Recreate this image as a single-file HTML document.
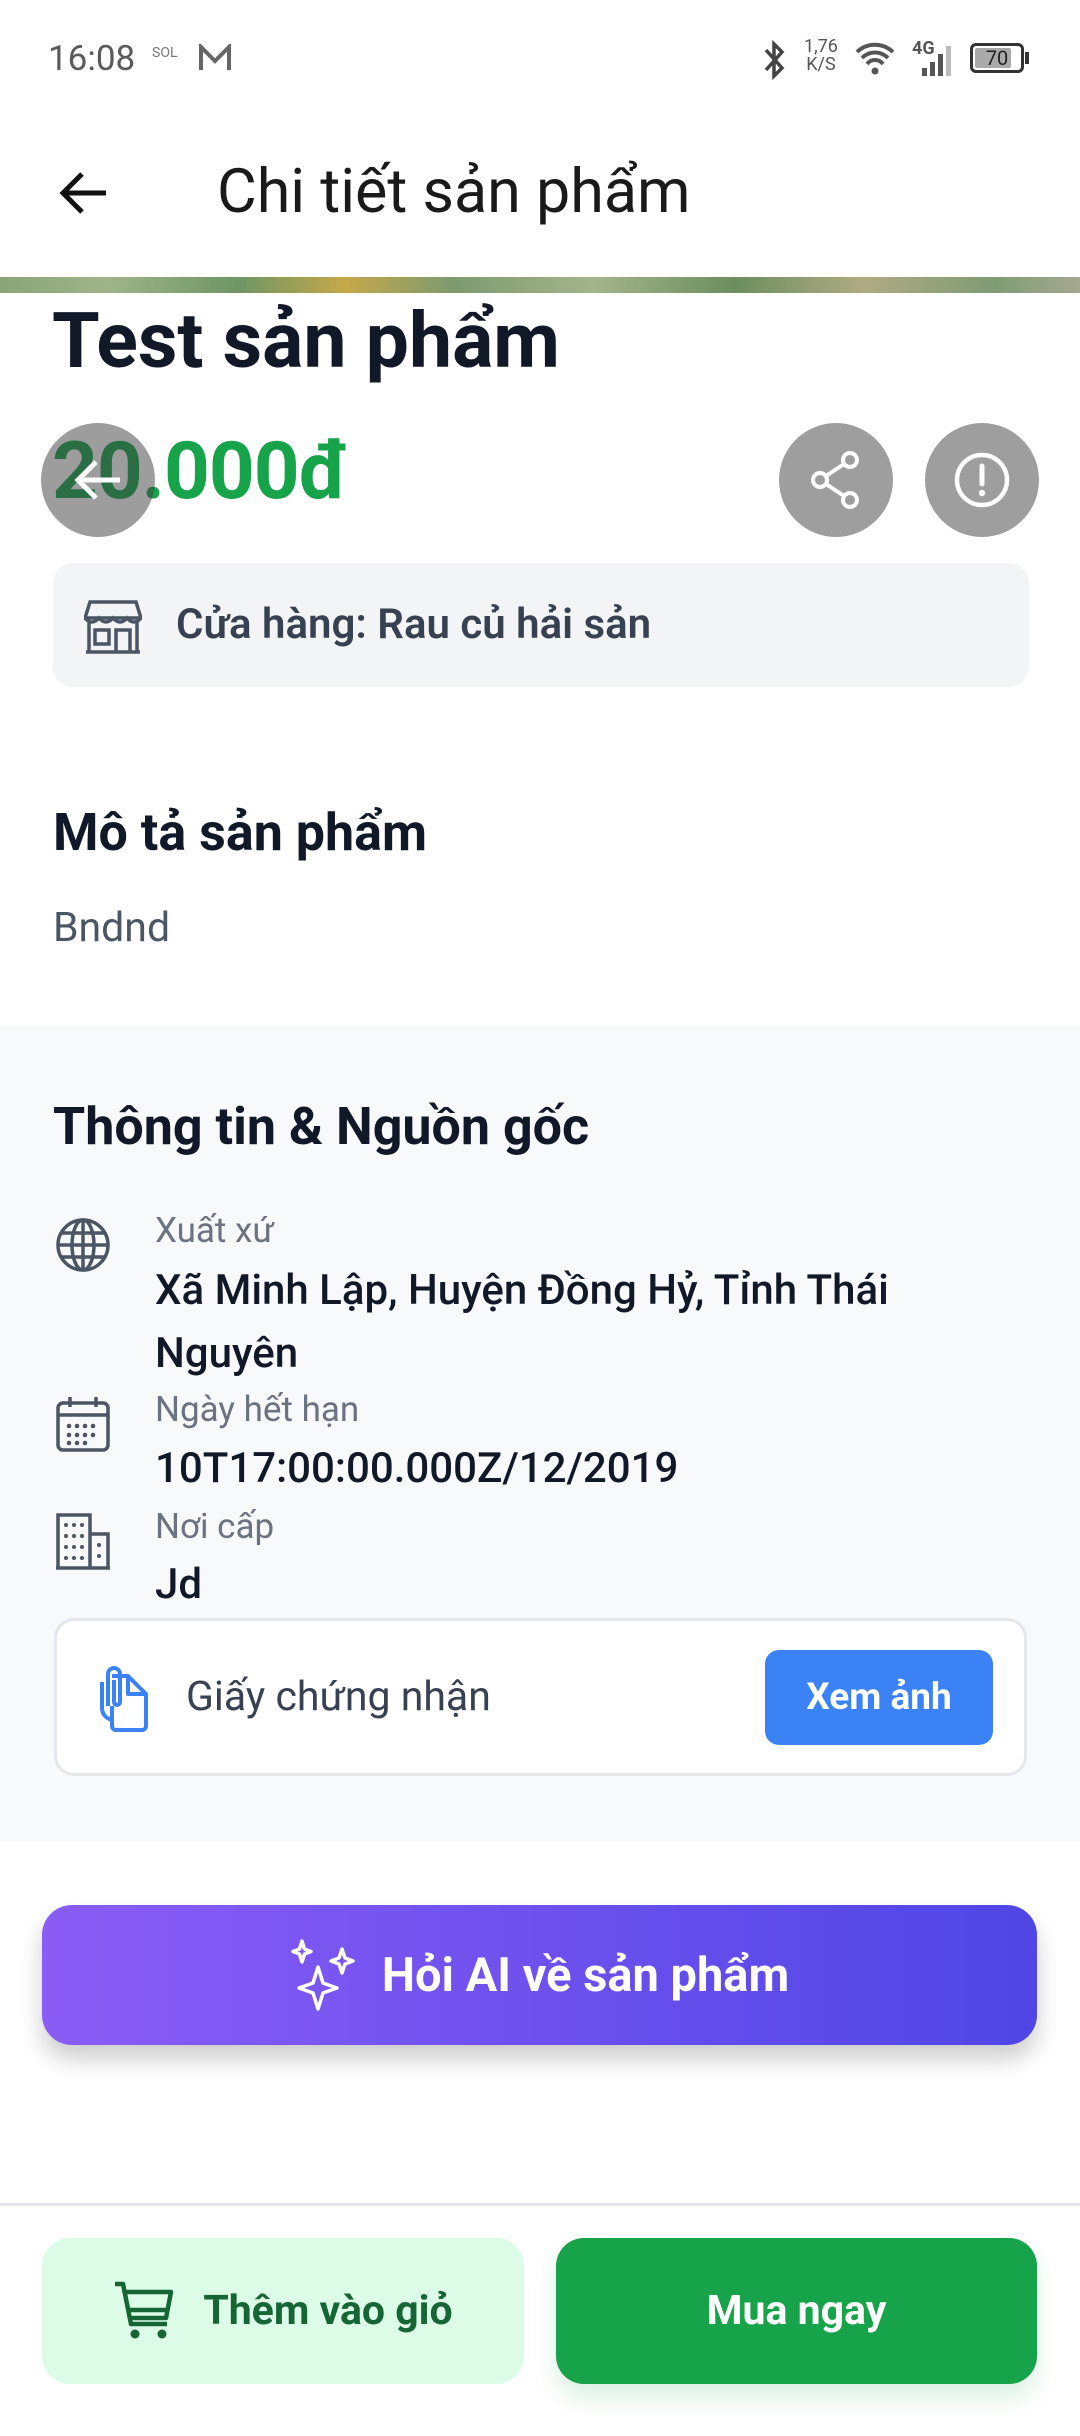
<!DOCTYPE html>
<html><head><meta charset="utf-8">
<style>
*{margin:0;padding:0;box-sizing:border-box}
body{width:1080px;height:2436px;position:relative;background:#fff;font-family:"Roboto","Liberation Sans","DejaVu Sans",sans-serif;overflow:hidden}
.a{position:absolute;white-space:nowrap}
.c{display:flex;align-items:center;justify-content:center}
</style></head><body>

<!-- status bar -->
<div class="a" style="left:48px;top:38px;font-size:35px;color:#5a5a5a">16:08</div>
<div class="a" style="left:152px;top:46px;font-size:14px;color:#777;line-height:14px">SOL</div>
<svg class="a" style="left:198px;top:44px" width="34" height="28" viewBox="0 0 34 28"><path d="M3 26V3l14 14L31 3v23" fill="none" stroke="#666" stroke-width="4"/></svg>
<svg class="a" style="left:762px;top:40px" width="26" height="40" viewBox="0 0 26 40"><path d="M4 10l16 18-8 8V4l8 8L4 30" fill="none" stroke="#444" stroke-width="3.5"/></svg>
<div class="a" style="left:804px;top:38px;font-size:18px;color:#555;line-height:18px;text-align:center">1,76<br>K/S</div>
<svg class="a" style="left:855px;top:40px" width="40" height="36" viewBox="0 0 40 36"><path d="M2 12a26 26 0 0 1 36 0M7 18a18 18 0 0 1 26 0M12 24a10 10 0 0 1 16 0" fill="none" stroke="#555" stroke-width="4"/><circle cx="20" cy="31" r="3.5" fill="#555"/></svg>
<div class="a" style="left:912px;top:38px;font-size:18px;color:#555;font-weight:bold">4G</div>
<svg class="a" style="left:920px;top:44px" width="34" height="34" viewBox="0 0 34 34"><rect x="2" y="24" width="5" height="8" fill="#555"/><rect x="10" y="18" width="5" height="14" fill="#555"/><rect x="18" y="10" width="5" height="22" fill="#555"/><rect x="26" y="2" width="5" height="30" fill="#bbb"/></svg>
<div class="a" style="left:970px;top:43px;width:54px;height:30px;border:3px solid #333;border-radius:6px"><div style="position:absolute;left:2px;top:2px;width:36px;height:20px;background:#aaa;border-radius:2px"></div><div style="position:absolute;left:0;top:0;width:48px;text-align:center;font-size:20px;line-height:24px;color:#222">70</div></div>
<div class="a" style="left:1025px;top:52px;width:4px;height:12px;background:#333"></div>

<!-- header -->
<svg class="a" style="left:56px;top:168px" width="56" height="50" viewBox="0 0 56 50"><path d="M50 25H8M26 6L7 25l19 19" fill="none" stroke="#111" stroke-width="5"/></svg>
<div class="a" style="left:217px;top:155px;font-size:61px;color:#1a1a1a">Chi tiết sản phẩm</div>

<!-- image strip -->
<div class="a" style="left:0;top:277px;width:1080px;height:16px;background:linear-gradient(90deg,#8aa478,#9fb48a 10%,#6f9566 22%,#c4a84a 32%,#7e9a70 42%,#a4b48c 55%,#6c8e5e 68%,#b0aa84 80%,#7f9c74 92%,#a4a890)"></div>

<!-- title & price -->
<div class="a" style="left:52px;top:296px;font-size:77px;font-weight:bold;color:#111827">Test sản phẩm</div>
<div class="a" style="left:52px;top:424px;font-size:80px;font-weight:bold;color:#16a34a;letter-spacing:-1px">20.000đ</div>

<div class="a c" style="left:41px;top:423px;width:114px;height:114px;border-radius:50%;background:rgba(60,60,60,0.5)">
<svg width="60" height="50" viewBox="0 0 60 50"><path d="M52 25H10M28 7L10 25l18 18" fill="none" stroke="#fff" stroke-width="5"/></svg></div>
<div class="a c" style="left:779px;top:423px;width:114px;height:114px;border-radius:50%;background:#9e9e9e">
<svg width="60" height="64" viewBox="0 0 60 64"><circle cx="44" cy="12" r="7" fill="none" stroke="#fff" stroke-width="4"/><circle cx="14" cy="32" r="7" fill="none" stroke="#fff" stroke-width="4"/><circle cx="44" cy="52" r="7" fill="none" stroke="#fff" stroke-width="4"/><path d="M20 28l18-12M20 36l18 12" stroke="#fff" stroke-width="4"/></svg></div>
<div class="a c" style="left:925px;top:423px;width:114px;height:114px;border-radius:50%;background:#9e9e9e">
<svg width="60" height="60" viewBox="0 0 60 60"><circle cx="30" cy="30" r="25" fill="none" stroke="#fff" stroke-width="4.5"/><path d="M30 16v18" stroke="#fff" stroke-width="5" stroke-linecap="round"/><circle cx="30" cy="43" r="3.2" fill="#fff"/></svg></div>

<!-- store -->
<div class="a" style="left:53px;top:563px;width:976px;height:124px;background:#f3f4f6;border-radius:20px"></div>
<svg class="a" style="left:84px;top:598px" width="58" height="56" viewBox="0 0 58 56"><path d="M6 4h46l5 16H1z" fill="none" stroke="#4b5563" stroke-width="3.5"/><path d="M1 20q7 8 14 0q7 8 14 0q7 8 14 0q7 8 14 0" fill="none" stroke="#4b5563" stroke-width="3.5"/><path d="M5 24v30h48V24M2 54h54M11 32h14v14H11zM32 54V32h14v22" fill="none" stroke="#4b5563" stroke-width="3.5"/></svg>
<div class="a" style="left:176px;top:600px;font-size:42px;font-weight:600;color:#374151">Cửa hàng: Rau củ hải sản</div>

<!-- description -->
<div class="a" style="left:53px;top:802px;font-size:52px;font-weight:bold;color:#111827">Mô tả sản phẩm</div>
<div class="a" style="left:53px;top:904px;font-size:41px;color:#4b5563">Bndnd</div>

<!-- info section -->
<div class="a" style="left:0;top:1026px;width:1080px;height:816px;background:#f8f9fb"></div>
<div class="a" style="left:53px;top:1096px;font-size:52px;font-weight:bold;color:#111827">Thông tin &amp; Nguồn gốc</div>

<svg class="a" style="left:55px;top:1217px" width="56" height="56" viewBox="0 0 56 56"><g fill="none" stroke="#4b5563" stroke-width="3.5"><circle cx="28" cy="28" r="25"/><ellipse cx="28" cy="28" rx="11" ry="25"/><path d="M3 28h50M7 16h42M7 40h42M28 3v50"/></g></svg>
<div class="a" style="left:155px;top:1210px;font-size:35px;color:#6b7280">Xuất xứ</div>
<div class="a" style="left:155px;top:1266px;font-size:42px;font-weight:500;color:#111827">Xã Minh Lập, Huyện Đồng Hỷ, Tỉnh Thái</div>
<div class="a" style="left:155px;top:1329px;font-size:42px;font-weight:500;color:#111827">Nguyên</div>

<svg class="a" style="left:55px;top:1395px" width="56" height="58" viewBox="0 0 56 58"><g fill="none" stroke="#4b5563" stroke-width="3.5"><rect x="3" y="8" width="50" height="47" rx="5"/><path d="M3 20h50M15 2v10M41 2v10"/></g><g fill="#4b5563"><circle cx="14" cy="31" r="2.3"/><circle cx="22" cy="31" r="2.3"/><circle cx="30" cy="31" r="2.3"/><circle cx="38" cy="31" r="2.3"/><circle cx="14" cy="40" r="2.3"/><circle cx="22" cy="40" r="2.3"/><circle cx="30" cy="40" r="2.3"/><circle cx="38" cy="40" r="2.3"/><circle cx="14" cy="48" r="2.3"/><circle cx="22" cy="48" r="2.3"/><circle cx="30" cy="48" r="2.3"/></g></svg>
<div class="a" style="left:155px;top:1389px;font-size:35px;color:#6b7280">Ngày hết hạn</div>
<div class="a" style="left:155px;top:1444px;font-size:42px;font-weight:500;color:#111827">10T17:00:00.000Z/12/2019</div>

<svg class="a" style="left:55px;top:1512px" width="56" height="58" viewBox="0 0 56 58"><g fill="none" stroke="#4b5563" stroke-width="3.5"><path d="M3 56V3h32v53M35 22h18v34M1 56h54"/></g><g fill="#4b5563"><circle cx="11" cy="13" r="2"/><circle cx="19" cy="13" r="2"/><circle cx="27" cy="13" r="2"/><circle cx="11" cy="24" r="2"/><circle cx="19" cy="24" r="2"/><circle cx="27" cy="24" r="2"/><circle cx="11" cy="35" r="2"/><circle cx="19" cy="35" r="2"/><circle cx="27" cy="35" r="2"/><circle cx="11" cy="46" r="2"/><circle cx="19" cy="46" r="2"/><circle cx="27" cy="46" r="2"/><circle cx="44" cy="33" r="2"/><circle cx="44" cy="44" r="2"/></g></svg>
<div class="a" style="left:155px;top:1506px;font-size:35px;color:#6b7280">Nơi cấp</div>
<div class="a" style="left:155px;top:1560px;font-size:42px;font-weight:500;color:#111827">Jd</div>

<!-- cert box -->
<div class="a" style="left:54px;top:1618px;width:973px;height:158px;background:#fff;border:3px solid #e5e7eb;border-radius:20px"></div>
<svg class="a" style="left:90px;top:1666px" width="62" height="68" viewBox="0 0 62 68"><g fill="none" stroke="#3b82f6" stroke-width="4" stroke-linejoin="round"><path d="M22 10h16l18 18v32a4 4 0 0 1-4 4H26a4 4 0 0 1-4-4V40"/><path d="M38 10v18h18"/><path d="M18 40V8a6 6 0 0 1 12 0v28a3 3 0 0 1-6 0V14"/><path d="M12 16v26a12 12 0 0 0 12 12"/></g></svg>
<div class="a" style="left:186px;top:1673px;font-size:41px;color:#374151">Giấy chứng nhận</div>
<div class="a c" style="left:765px;top:1650px;width:228px;height:95px;background:#3b82f6;border-radius:14px;color:#fff;font-size:37px;font-weight:bold">Xem ảnh</div>

<!-- AI button -->
<div class="a c" style="left:42px;top:1905px;width:995px;height:140px;border-radius:30px;background:linear-gradient(90deg,#8b5cf6,#4f46e5);box-shadow:0 14px 24px rgba(0,0,0,0.2);color:#fff;font-size:47px;font-weight:bold">
<svg style="margin-right:22px" width="70" height="72" viewBox="0 0 70 72"><g fill="none" stroke="#fff" stroke-width="3.5" stroke-linejoin="round"><path d="M28 28l5 16 14 5-14 5-5 16-5-16-14-5 14-5z"/><path d="M12 2l2.5 8 6.5 2.5-6.5 2.5L12 23l-2.5-8L3 12.5l6.5-2.5z"/><path d="M52 10l3 9 8 3-8 3-3 9-3-9-8-3 8-3z"/></g></svg>
Hỏi AI về sản phẩm</div>

<!-- bottom bar -->
<div class="a" style="left:0;top:2203px;width:1080px;height:3px;background:#e5e7eb"></div>
<div class="a c" style="left:42px;top:2238px;width:482px;height:146px;border-radius:28px;background:#dcfce7;color:#166534;font-size:41px;font-weight:bold">
<svg style="margin-right:28px" width="62" height="62" viewBox="0 0 62 62"><g fill="none" stroke="#166534" stroke-width="4.5" stroke-linejoin="round"><path d="M2 4h8l8 40h36"/><path d="M12 12h46l-5 26H17"/><path d="M15 30h40"/></g><circle cx="22" cy="54" r="4.5" fill="#166534"/><circle cx="49" cy="54" r="4.5" fill="#166534"/></svg>
Thêm vào giỏ</div>
<div class="a c" style="left:556px;top:2238px;width:481px;height:146px;border-radius:28px;background:#16a34a;color:#fff;font-size:41px;font-weight:bold;box-shadow:0 14px 24px rgba(22,163,74,0.15)">Mua ngay</div>

</body></html>
